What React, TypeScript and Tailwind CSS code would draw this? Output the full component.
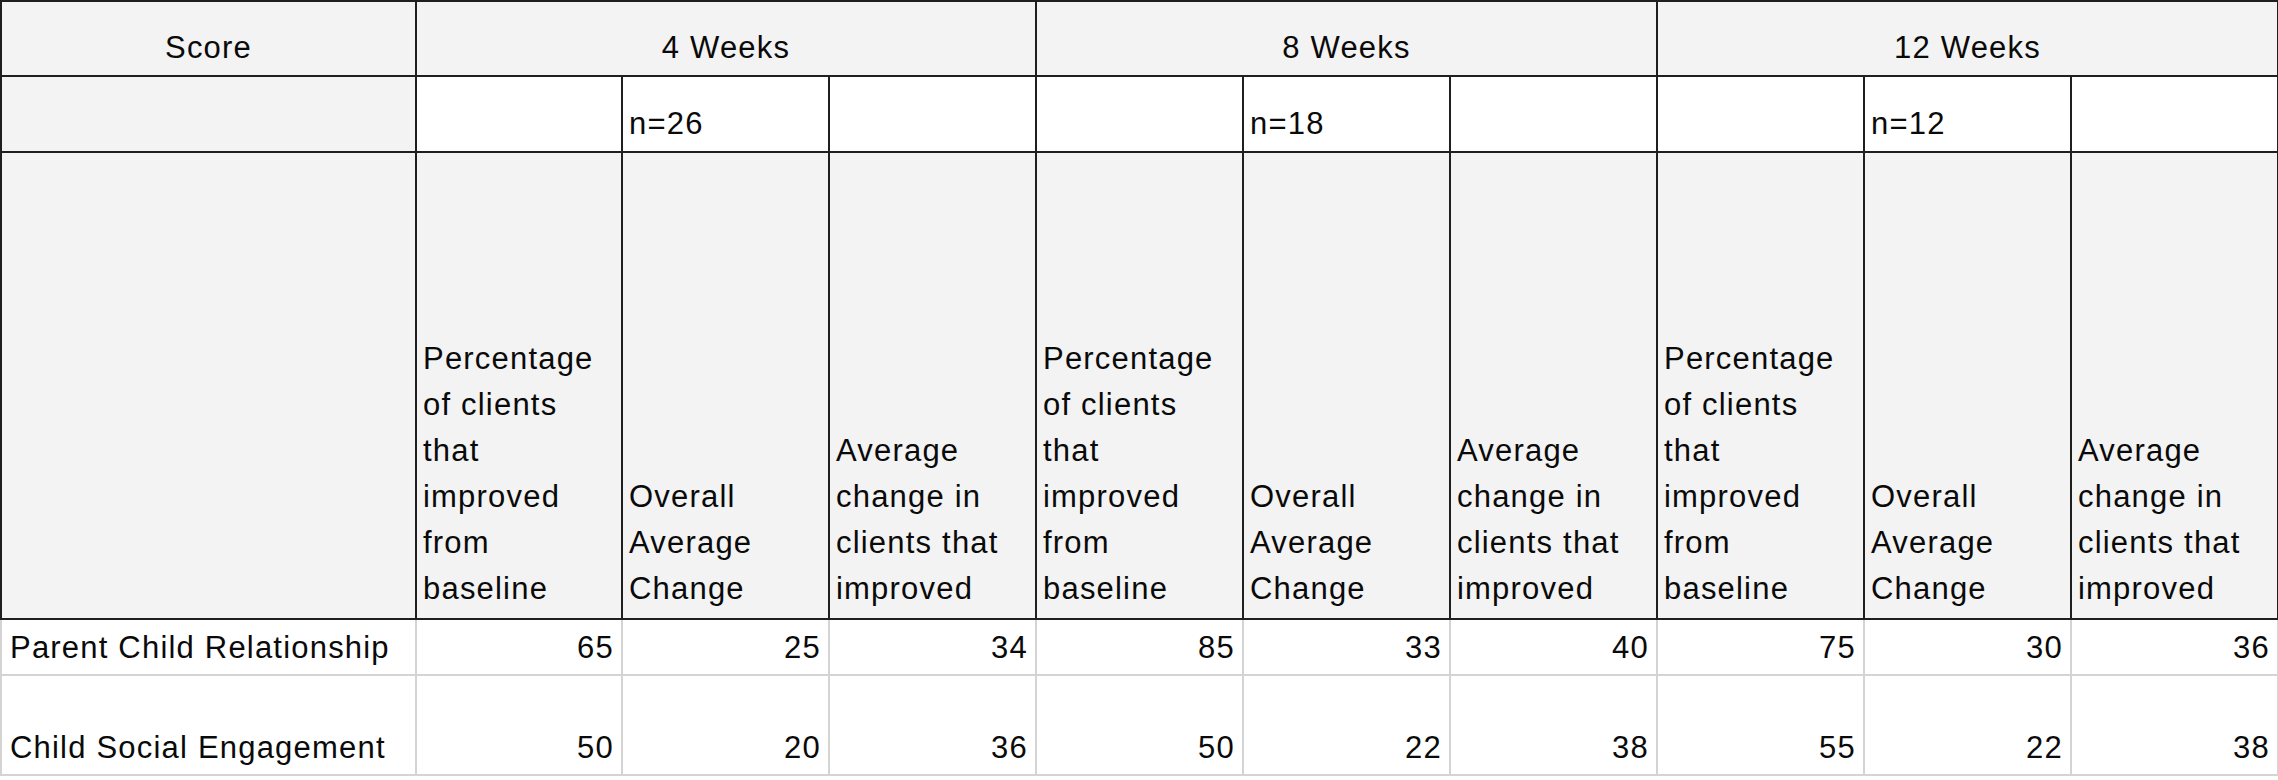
const groups = [
  { label: '4 Weeks', n: 'n=26' },
  { label: '8 Weeks', n: 'n=18' },
  { label: '12 Weeks', n: 'n=12' },
];

const subHeads = [
  'Percentage of clients that improved from baseline',
  'Overall Average Change',
  'Average change in clients that improved',
];

const rows = [
  { label: 'Parent Child Relationship', h: 'h-[56px]', values: [65, 25, 34, 85, 33, 40, 75, 30, 36] },
  { label: 'Child Social Engagement', h: 'h-[100px]', values: [50, 20, 36, 50, 22, 38, 55, 22, 38] },
];

const head = 'flex items-end border-r-2 border-b-2 border-[#1f1f1f] px-[6px] pb-[4px]';
const cell = 'flex items-end border-r-2 border-b-2 border-[#d4d4d4] bg-white px-[7px] pb-[3px]';

export default function App() {
  return (
    <div className="w-[2278px] h-[780px] overflow-hidden bg-white text-[31px] leading-[46px] tracking-[1.2px] text-[#0a0a0a] font-['Liberation_Sans',Arial,sans-serif]">
      <div className="grid grid-cols-[417px_206px_207px_207px_207px_207px_207px_207px_207px_207px]">
        {/* row 1: group titles */}
        <div className={`${head} h-[77px] border-t-2 border-l-2 bg-[#f3f3f3] justify-center`}>Score</div>
        {groups.map((g) => (
          <div key={g.label} className={`${head} col-span-3 h-[77px] border-t-2 bg-[#f3f3f3] justify-center`}>
            {g.label}
          </div>
        ))}

        {/* row 2: sample sizes */}
        <div className={`${head} h-[76px] border-l-2 bg-[#f3f3f3]`} />
        {groups.map((g) => [
          <div key={g.label + 'a'} className={`${head} h-[76px] bg-white`} />,
          <div key={g.label + 'b'} className={`${head} h-[76px] bg-white`}>{g.n}</div>,
          <div key={g.label + 'c'} className={`${head} h-[76px] bg-white`} />,
        ])}

        {/* row 3: column headings */}
        <div className={`${head} h-[467px] border-l-2 bg-[#f3f3f3]`} />
        {groups.map((g) =>
          subHeads.map((s) => (
            <div key={g.label + s} className={`${head} h-[467px] bg-[#f3f3f3] pb-[6px]`}>
              <span>{s}</span>
            </div>
          )),
        )}

        {/* data rows */}
        {rows.map((r) => [
          <div key={r.label} className={`${cell} ${r.h} border-l-2 pl-[8px]`}>{r.label}</div>,
          ...r.values.map((v, i) => (
            <div key={r.label + i} className={`${cell} ${r.h} justify-end`}>{v}</div>
          )),
        ])}
      </div>
    </div>
  );
}
